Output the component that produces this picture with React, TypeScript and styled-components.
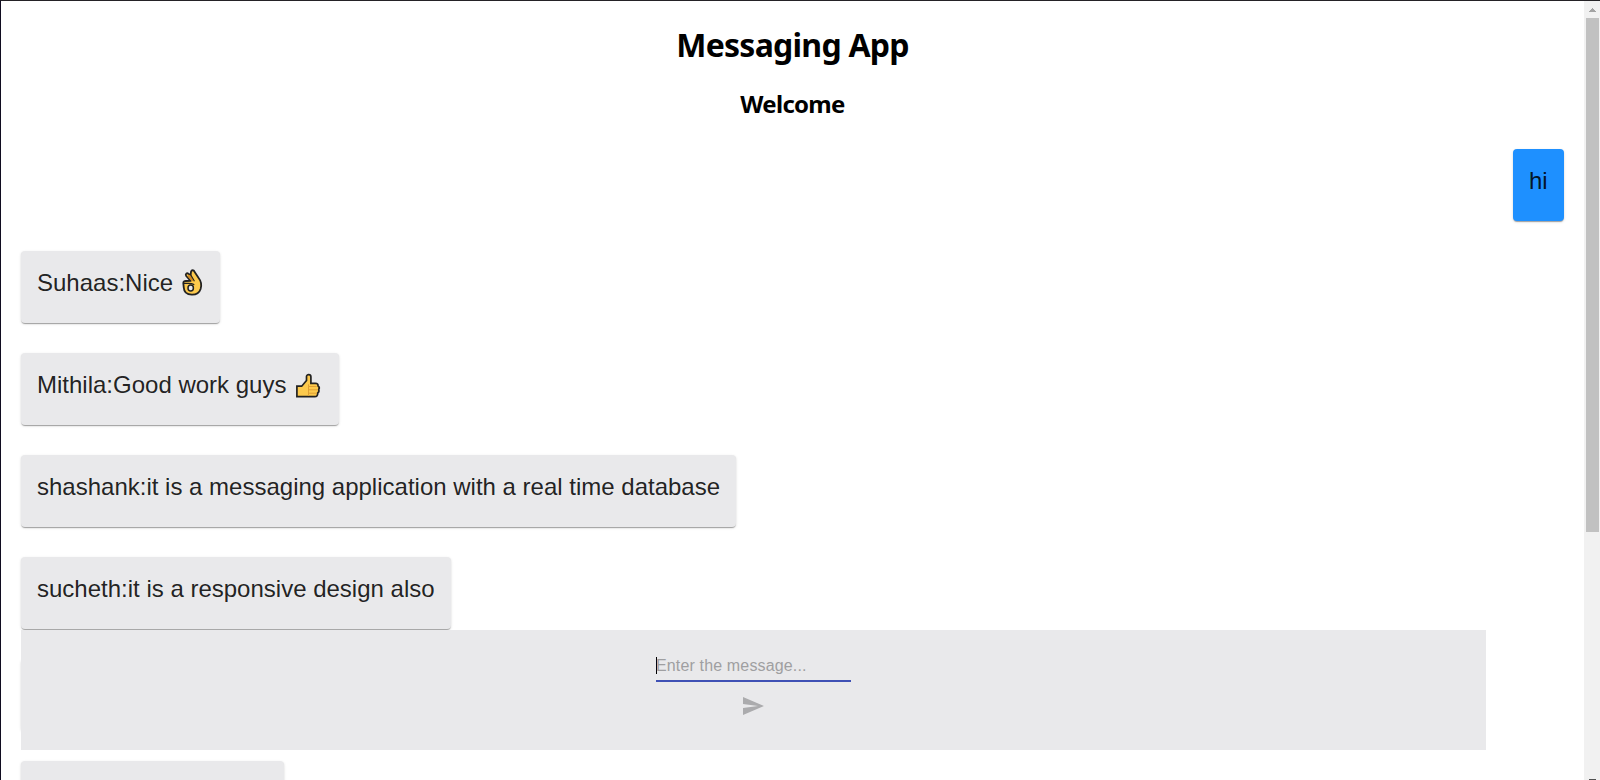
import React from "react";
import styled, { createGlobalStyle } from "styled-components";

const GlobalStyle = createGlobalStyle`
  * { box-sizing: border-box; }
  body { margin: 0; background: #fff; overflow: hidden; }
`;

const Window = styled.div`
  position: relative;
  display: flex;
  width: 1600px;
  height: 780px;
  overflow: hidden;
  border-top: 1px solid #242226;
  border-left: 1px solid #100c20;
  background: #fff;
`;

const EdgeMark = styled.span`
  position: absolute;
  left: -1px;
  top: 624px;
  width: 1px;
  height: 2px;
  background: #d0226e;
`;

const Page = styled.main`
  flex: 1;
  min-width: 0;
  height: 779px;
  overflow: hidden;
  padding: 22px 20px 0;
`;

const Heading = styled.h1`
  margin: 0;
  text-align: center;
  font: 700 32px/43px "Noto Sans", "Open Sans", sans-serif;
  letter-spacing: -0.75px;
  color: #000;
`;

const SubHeading = styled.h2`
  margin: 22px 0 29px;
  text-align: center;
  font: 700 24px/32px "Noto Sans", "Open Sans", sans-serif;
  letter-spacing: -0.7px;
  color: #000;
`;

const MessageList = styled.div`
  display: flex;
  flex-direction: column;
  gap: 30px;
`;

const Card = styled.article<{ $own?: boolean; $width?: number }>`
  flex: none;
  align-self: ${(p) => (p.$own ? "flex-end" : "flex-start")};
  width: ${(p) => (p.$width ? `${p.$width}px` : "auto")};
  height: 72px;
  padding: 16px 16px 24px;
  border-radius: 4px;
  background: ${(p) => (p.$own ? "dodgerblue" : "#e9e9eb")};
  box-shadow: 0 2px 1px -1px rgba(0, 0, 0, 0.2), 0 1px 1px 0 rgba(0, 0, 0, 0.14),
    0 1px 3px 0 rgba(0, 0, 0, 0.12);
`;

const MessageText = styled.p`
  display: flex;
  margin: 0;
  font: 400 24px/32px "Liberation Sans", Arial, sans-serif;
  color: rgba(0, 0, 0, 0.87);
  white-space: pre;
`;

const Composer = styled.form`
  position: absolute;
  left: 20px;
  top: 629px;
  display: flex;
  flex-direction: column;
  align-items: center;
  width: 1465px;
  height: 120px;
  padding-top: 24px;
  background: #e9e9eb;
`;

const Field = styled.div`
  display: flex;
  align-items: center;
  width: 195px;
  height: 28px;
  padding-bottom: 3px;
  border-bottom: 2px solid #3f51b5;
`;

const Caret = styled.span`
  width: 1px;
  height: 17px;
  margin-right: -1px;
  background: #000;
`;

const Placeholder = styled.span`
  font: 400 16px/19px "Liberation Sans", Arial, sans-serif;
  letter-spacing: 0.15px;
  color: #9f9fa1;
  white-space: nowrap;
`;

const SendIcon = styled.svg`
  width: 24px;
  height: 24px;
  margin-top: 12px;
  margin-right: 1px;
  fill: #ababad;
`;

const ScrollTrack = styled.aside`
  display: flex;
  flex-direction: column;
  align-items: center;
  justify-content: space-between;
  width: 16px;
  height: 779px;
  background: #f1f1f1;
`;

const ScrollTop = styled.div`
  display: flex;
  flex-direction: column;
  align-items: flex-end;
  width: 16px;
  padding-right: 1px;
`;

const Arrow = styled.svg`
  width: 13px;
  height: 17px;
`;

const Thumb = styled.div`
  width: 13px;
  height: 514px;
  background: #c1c1c1;
`;

const ArrowDown = styled.div`
  width: 7px;
  height: 1px;
  background: #505050;
`;

const Emoji = styled.svg<{ $w: number }>`
  flex: none;
  width: ${(p) => p.$w}px;
  height: 32px;
`;

const OkHand = () => (
  <Emoji $w={24} viewBox="1 0 24 32" stroke="#222" strokeWidth="1.8" strokeLinejoin="round" strokeLinecap="round">
    <path
      d="M11.6 8.2 L12 4.8 C12.6 2.5 15.2 3 15.5 4.8 L19.8 11.2 C22.2 14.2 22.8 18 21.6 22 C20.2 26.3 16.6 27.8 12.8 27.7 C8 27.6 5 25 4.8 20.8 L4.3 16.2 C4.2 14.6 5.4 14 6.8 14 L11.6 13.9 L7.2 9 C6 7 7.9 5.5 9.4 6.8 Z"
      fill="#fdca4d"
    />
    <path d="M9.6 7.8 L11.8 8.6 L15 14.4 L12.6 13.9 L8.6 9.6 Z" fill="#d18a1e" stroke="none" />
    <path d="M12 8.4 L15.2 13.8" fill="none" strokeWidth="1.1" />
    <path d="M4.6 16.4 H9.4 C11.5 16.4 13.6 16.7 14.8 17.6" fill="none" strokeWidth="1.3" />
    <ellipse cx="11.7" cy="21" rx="2.7" ry="3" fill="#e9e9eb" strokeWidth="1.5" />
  </Emoji>
);

const ThumbsUp = () => (
  <Emoji $w={30} viewBox="1 0 30 32">
    <path
      d="M4.9 17.2 H9.7 L14.5 11.5 V7.5 C14.5 5 18.9 5 18.9 7.8 V14.3 H23.3 C25.6 14.3 26.2 15.4 26 16.8 C27.3 17.8 27.4 19.5 26.7 20.5 C27.2 22 26.8 23.3 25.7 24 C25.8 26.2 24.9 27.7 22.7 27.7 H4.9 Z"
      fill="#fdca4d"
      stroke="#222"
      strokeWidth="1.7"
      strokeLinejoin="miter"
    />
    <path d="M24.7 17.5 H16.5 V27 M16.5 20.8 H25.5 M16.5 24.2 H24.7 M16.5 17.5 V15.3" fill="none" stroke="#dfa035" strokeWidth="1" />
  </Emoji>
);

const messages: { text: string; own?: boolean; width?: number; emoji?: React.ReactNode }[] = [
  { text: "hi", own: true, width: 51 },
  { text: "Suhaas:Nice ", emoji: <OkHand /> },
  { text: "Mithila:Good work guys ", emoji: <ThumbsUp /> },
  { text: "shashank:it is a messaging application with a real time database" },
  { text: "sucheth:it is a responsive design also" },
  { text: "", width: 300 },
  { text: "", width: 263 },
];

export default function App() {
  return (
    <>
      <GlobalStyle />
      <Window>
        <EdgeMark />
        <Page>
          <Heading>Messaging App</Heading>
          <SubHeading>Welcome</SubHeading>
          <MessageList>
            {messages.map((m, i) => (
              <Card key={i} $own={m.own} $width={m.width}>
                <MessageText>
                  {m.text}
                  {m.emoji}
                </MessageText>
              </Card>
            ))}
          </MessageList>
        </Page>
        <Composer>
          <Field>
            <Caret />
            <Placeholder>Enter the message...</Placeholder>
          </Field>
          <SendIcon viewBox="0 0 24 24">
            <path d="M2.01 21L23 12 2.01 3 2 10l15 2-15 2z" />
          </SendIcon>
        </Composer>
        <ScrollTrack>
          <ScrollTop>
            <Arrow viewBox="0 0 13 17" shapeRendering="crispEdges">
              <path d="M3 11 L6.5 7 L10 11 Z" fill="#a3a3a3" />
            </Arrow>
            <Thumb />
          </ScrollTop>
          <ArrowDown />
        </ScrollTrack>
      </Window>
    </>
  );
}
